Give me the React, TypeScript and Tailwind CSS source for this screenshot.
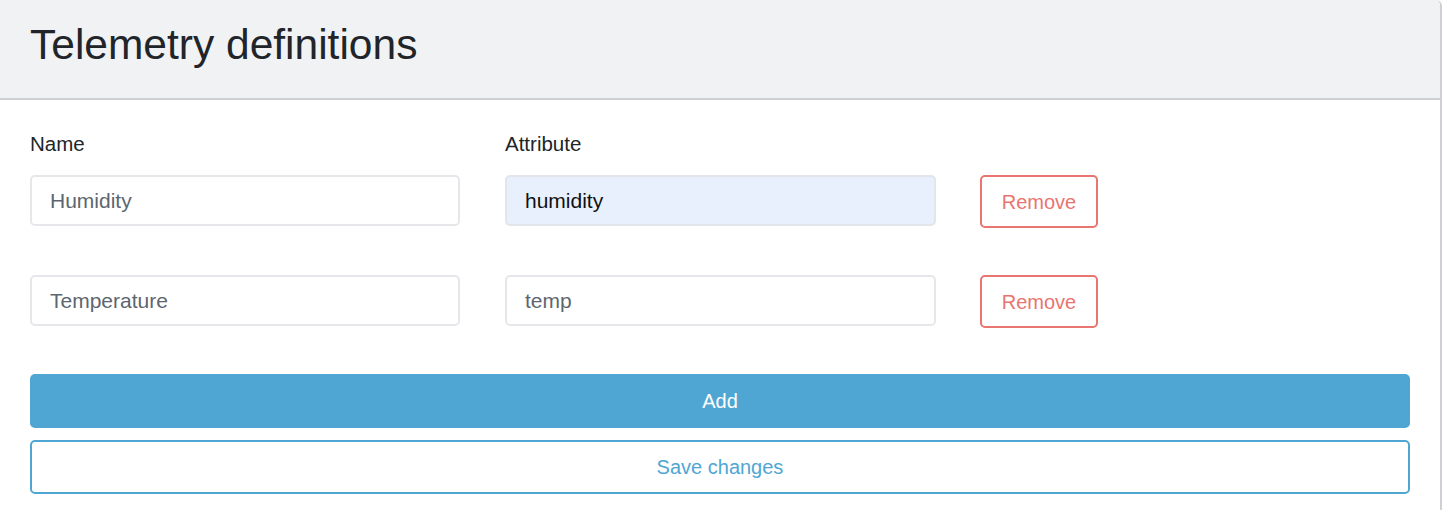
import React from "react";

const font = { fontFamily: '"Liberation Sans", Arial, sans-serif' };

function Field({ value, filled }: { value: string; filled?: boolean }) {
  return (
    <input
      readOnly
      value={value}
      className={
        "h-[51px] rounded-[5px] border-2 px-[18px] text-[21px] outline-none " +
        (filled
          ? "bg-[#e8f0fe] border-[#e2e5ea] text-[#111111]"
          : "bg-white border-[#e6e7eb] text-[#5d6670]")
      }
      style={font}
    />
  );
}

function RemoveBtn() {
  return (
    <button
      className="h-[53px] w-[118px] -ml-[1px] rounded-[5px] border-2 border-[#e87570] bg-white text-[20px] text-[#e87570]"
      style={font}
    >
      Remove
    </button>
  );
}

export default function App() {
  return (
    <div className="w-[1442px] h-[510px] bg-white overflow-hidden" style={font}>
      <div className="w-[1442px] h-[510px] border-r-2 border-[#cdd0d4] rounded-tr-[6px] overflow-hidden">
        <div className="h-[100px] bg-[#f1f2f4] border-b-2 border-[#cdd0d4] px-[30px] flex items-center pb-[8px]">
          <h2 className="text-[42.5px] text-[#212529] font-normal leading-[48px]">
            Telemetry definitions
          </h2>
        </div>
        <div className="px-[30px] pt-[32px]">
          <div className="grid grid-cols-[430px_431px_118px] gap-x-[45px] items-start">
            <label className="text-[20.5px] leading-[24px] text-[#212529] mb-[19px]">Name</label>
            <label className="text-[20.5px] leading-[24px] text-[#212529] mb-[19px]">Attribute</label>
            <div />
            <Field value="Humidity" />
            <Field value="humidity" filled />
            <RemoveBtn />
            <div className="col-span-3 h-[47px]" />
            <Field value="Temperature" />
            <Field value="temp" />
            <RemoveBtn />
          </div>
          <button className="mt-[46px] w-full h-[54px] rounded-[5px] bg-[#4fa6d3] text-white text-[20px]" style={font}>
            Add
          </button>
          <button
            className="mt-[12px] w-full h-[54px] rounded-[5px] border-2 border-[#4fa6d3] bg-white text-[#4fa6d3] text-[20px]"
            style={font}
          >
            Save changes
          </button>
        </div>
      </div>
    </div>
  );
}
